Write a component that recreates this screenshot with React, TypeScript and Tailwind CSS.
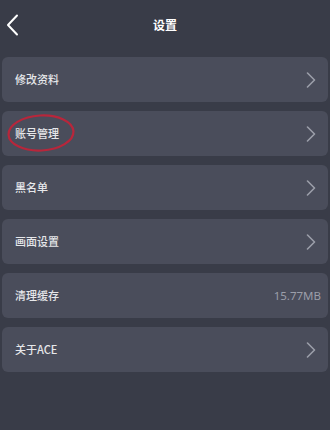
import React from 'react';

type Row = { label: string; value?: string; circled?: boolean };

const ROWS: Row[] = [
  { label: '修改资料' },
  { label: '账号管理', circled: true },
  { label: '黑名单' },
  { label: '画面设置' },
  { label: '清理缓存', value: '15.77MB' },
  { label: '关于ACE' },
];

const Chevron = () => (
  <svg width="10" height="16" viewBox="0 0 10 16" className="text-[#9b9ea9]">
    <polyline points="1.5,1 8.5,8 1.5,15" fill="none" stroke="currentColor" strokeWidth="1.6" strokeLinecap="round" strokeLinejoin="round" />
  </svg>
);

export default function App() {
  return (
    <div
      className="w-[330px] h-[430px] bg-[#393c48] overflow-hidden"
      style={{ fontFamily: '"Noto Sans CJK SC", "Noto Sans", sans-serif' }}
    >
      {/* header */}
      <div className="relative h-[50px] flex items-center justify-center">
        <svg width="14" height="22" viewBox="0 0 14 22" className="absolute left-[5px] top-[14px] text-white">
          <polyline points="12,1.5 3,11 12,20.5" fill="none" stroke="currentColor" strokeWidth="2" strokeLinecap="round" strokeLinejoin="round" />
        </svg>
        <span className="text-[12px] font-bold text-white leading-none">设置</span>
      </div>

      <div className="flex flex-col gap-[9px] px-[2px] pt-[7px]">
        {ROWS.map((row) => (
          <div
            key={row.label}
            className="relative h-[45px] rounded-[6px] bg-[#4a4d5b] flex items-center justify-between pl-[13px] pr-[12px]"
          >
            <span className="text-[11px] font-medium text-[#e6e7ea] leading-none">{row.label}</span>
            {row.value ? (
              <span className="text-[11.5px] text-[#9b9ea9] leading-none -mr-[5px]" style={{ fontFamily: '"Noto Sans", sans-serif' }}>
                {row.value}
              </span>
            ) : (
              <Chevron />
            )}
            {row.circled && (
              <svg width="72" height="42" viewBox="0 0 72 42" className="absolute left-[3px] top-[1px] pointer-events-none">
                <ellipse cx="36" cy="21" rx="32.5" ry="17.5" transform="rotate(-3 36 21)" fill="none" stroke="#b8263b" strokeWidth="2.2" />
              </svg>
            )}
          </div>
        ))}
      </div>
    </div>
  );
}
